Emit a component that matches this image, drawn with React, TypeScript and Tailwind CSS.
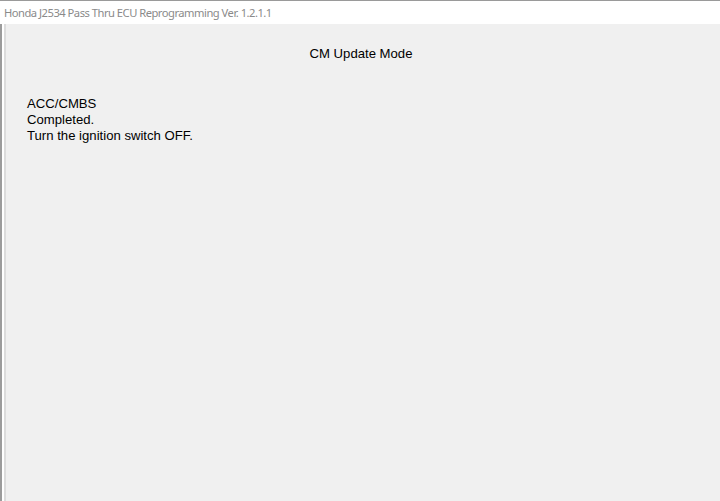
import React from 'react';

const App = () => {
  const lines = ['ACC/CMBS', 'Completed.', 'Turn the ignition switch OFF.'];

  return (
    <div className="w-[720px] h-[501px] flex flex-col bg-[#f0f0f0] overflow-hidden">
      {/* title bar */}
      <div className="h-[24px] shrink-0 bg-white border-t border-[#9a9a9a] flex items-center pl-[4px]">
        <span className="text-[11.2px] tracking-[-0.5px] text-[#8a8a8a] leading-none" style={{ fontFamily: '"Noto Sans", "Open Sans", sans-serif' }}>
          Honda J2534 Pass Thru ECU Reprogramming Ver. 1.2.1.1
        </span>
      </div>

      <div className="flex flex-1 min-h-0">
        {/* left window frame */}
        <div className="w-[6px] shrink-0 flex">
          <div className="w-[2px] bg-[#9c9c9c]" />
          <div className="w-[2px] bg-white" />
          <div className="w-[2px] bg-[#dcdcdc]" />
        </div>

        <div className="flex-1 flex flex-col text-[13.15px] text-black" style={{ fontFamily: '"Liberation Sans", Arial, sans-serif' }}>
          <div className="pt-[22px] text-center pr-[4px] leading-[16px]">CM Update Mode</div>
          <div className="mt-[34px] pl-[21px] flex flex-col leading-[16px]">
            {lines.map((l, i) => (
              <div key={i}>{l}</div>
            ))}
          </div>
        </div>
      </div>
    </div>
  );
};

export default App;
